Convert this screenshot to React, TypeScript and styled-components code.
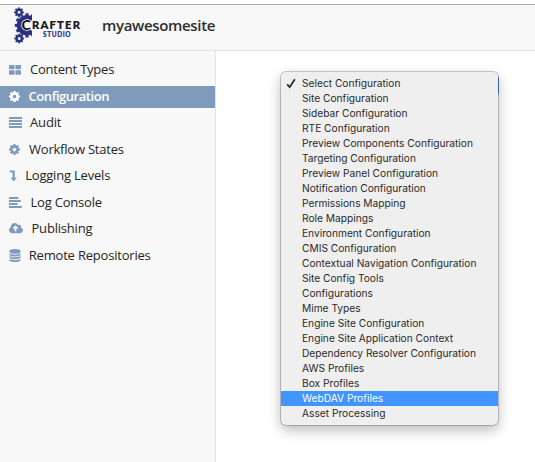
import React from "react";
import styled, { createGlobalStyle } from "styled-components";

const GlobalStyle = createGlobalStyle`
  * { box-sizing: border-box; }
  body { margin: 0; background: #fff; overflow: hidden; }
`;

const Page = styled.div`
  display: flex;
  flex-direction: column;
  width: 535px;
  height: 462px;
  padding-top: 4px;
  background: #fff;
  font-family: "Open Sans", sans-serif;
  color: #262626;
`;

const Header = styled.header`
  display: flex;
  flex: 0 0 47px;
  border-top: 1px solid #a9a9a9;
  border-bottom: 1px solid #e3e3e3;
  background: #f8f8f8;
  padding-left: 12px;
`;

const Logo = styled.svg`
  width: 70px;
  height: 40px;
  flex: none;
  margin-top: 1px;
`;

const SiteName = styled.h1`
  margin: 8px 0 0 20px;
  font-size: 15px;
  line-height: 24px;
  font-weight: 600;
  letter-spacing: -0.33px;
  color: #2e2e2e;
`;

const Body = styled.div`
  display: flex;
  flex: 1;
  min-height: 0;
`;

const Sidebar = styled.nav`
  flex: 0 0 216px;
  border-right: 1px solid #e3e3e3;
  background: #f8f8f8;
  padding-top: 6px;
`;

const NavRow = styled.a<{ $active?: boolean }>`
  display: flex;
  align-items: center;
  height: 22px;
  margin: 2px 0 4.55px;
  padding-left: 9px;
  font-size: 13px;
  line-height: 20px;
  white-space: nowrap;
  color: ${(p) => (p.$active ? "#fff" : "#262626")};
  font-weight: ${(p) => (p.$active ? 600 : 400)};
  background: ${(p) => (p.$active ? "#7e9bbb" : "transparent")};
`;

const NavIcon = styled.svg<{ $w: number }>`
  flex: none;
  width: ${(p) => p.$w}px;
  height: 13px;
  fill: currentColor;
`;

const IconTint = styled.span<{ $active?: boolean; $slot: number }>`
  display: flex;
  flex: 0 0 ${(p) => p.$slot}px;
  margin-bottom: 1px;
  color: ${(p) => (p.$active ? "#fff" : "#7e9bbb")};
`;

const NavLabel = styled.span<{ $track: number }>`
  margin-bottom: 2px;
  letter-spacing: ${(p) => p.$track}px;
`;

const Content = styled.main`
  position: relative;
  flex: 1;
  background: #fff;
`;

const SelectField = styled.div`
  position: absolute;
  left: 70px;
  top: 24px;
  width: 213px;
  height: 21px;
  border-radius: 4px;
  background: #4a90e8;
`;

const Menu = styled.ul`
  position: absolute;
  left: 65px;
  top: 21px;
  width: 217px;
  margin: 0;
  padding: 4px 0;
  list-style: none;
  border-radius: 5px;
  background: #efefef;
  box-shadow: 0 0 0 1px rgba(0, 0, 0, 0.2), 0 5px 13px rgba(0, 0, 0, 0.28);
  font-family: Inter, sans-serif;
`;

const Option = styled.li<{ $selected?: boolean }>`
  display: flex;
  align-items: center;
  height: 15px;
  padding-left: 5px;
  font-size: 10.2px;
  line-height: 15px;
  white-space: nowrap;
  color: ${(p) => (p.$selected ? "#fff" : "#2a2a2a")};
  background: ${(p) => (p.$selected ? "#4294ff" : "transparent")};
`;

const CheckSlot = styled.span`
  display: flex;
  flex: 0 0 16px;
`;

const OptionLabel = styled.span`
  letter-spacing: 0;
`;

const COG =
  "M1152 896q0-106-75-181t-181-75-181 75-75 181 75 181 181 75 181-75 75-181zm512-109v222q0 12-8 23t-20 13l-185 28q-19 54-39 91 35 50 107 138 10 12 10 25t-9 23q-27 37-99 108t-94 71q-12 0-26-9l-138-108q-44 23-91 38-16 136-29 186-7 28-36 28h-222q-14 0-24.5-8.5t-11.5-21.5l-28-184q-49-16-90-37l-141 107q-10 9-25 9-14 0-25-11-126-114-165-168-7-10-7-23 0-12 8-23 15-21 51-66.5t54-70.5q-27-50-41-99l-183-27q-13-2-21-12.5t-8-23.5v-222q0-12 8-23t19-13l186-28q14-46 39-92-40-57-107-138-10-12-10-24 0-10 9-23 26-36 98.5-107.5t94.5-71.5q13 0 26 10l138 107q44-23 91-38 16-136 29-186 7-28 36-28h222q14 0 24.5 8.5t11.5 21.5l28 184q49 16 90 37l142-107q9-9 24-9 13 0 25 10 129 119 165 170 7 8 7 22 0 12-8 23-15 21-51 66.5t-54 70.5q26 50 41 98l183 28q13 2 21 12.5t8 23.5z";
const CLOUD =
  "M1216 864q0-14-9-23l-352-352q-9-9-23-9t-23 9l-351 351q-10 12-10 24 0 14 9 23t23 9h224v352q0 13 9.5 22.5t22.5 9.5h192q13 0 22.5-9.5t9.5-22.5v-352h224q13 0 22.5-9.5t9.5-22.5zm640 288q0 159-112.5 271.5t-271.5 112.5h-1088q-185 0-316.5-131.5t-131.5-316.5q0-130 70-240t188-165q-2-30-2-43 0-212 150-362t362-150q156 0 285.5 87t188.5 231q71-62 166-62 106 0 181 75t75 181q0 76-41 138 130 31 213.5 135.5t83.5 238.5z";
const DATABASE =
  "M896 768q237 0 443-43t325-127v170q0 69-103 128t-280 93.5-385 34.5-385-34.5-280-93.5-103-128v-170q119 84 325 127t443 43zm0 768q237 0 443-43t325-127v170q0 69-103 128t-280 93.5-385 34.5-385-34.5-280-93.5-103-128v-170q119 84 325 127t443 43zm0-384q237 0 443-43t325-127v170q0 69-103 128t-280 93.5-385 34.5-385-34.5-280-93.5-103-128v-170q119 84 325 127t443 43zm0-1152q208 0 385 34.5t280 93.5 103 128v128q0 69-103 128t-280 93.5-385 34.5-385-34.5-280-93.5-103-128v-128q0-69 103-128t280-93.5 385-34.5z";

const icons: Record<string, { w: number; box: string; d: string }> = {
  grid: {
    w: 12,
    box: "0 0 12 13",
    d: "M.8 2h4a.8.8 0 0 1 .8.8v2.700a.8.8 0 0 1-.8.8h-4A.8.8 0 0 1 0 5.500V2.800A.8.8 0 0 1 .8 2zM7.200 2h4a.8.8 0 0 1 .8.8v2.700a.8.8 0 0 1-.8.8h-4a.8.8 0 0 1-.8-.8V2.800a.8.8 0 0 1 .8-.8zM.8 7.300h4a.8.8 0 0 1 .8.8v2.900a.8.8 0 0 1-.8.8h-4A.8.8 0 0 1 0 11V8.100a.8.8 0 0 1 .8-.8zM7.200 7.300h4a.8.8 0 0 1 .8.8V11a.8.8 0 0 1-.8.8h-4a.8.8 0 0 1-.8-.8V8.100a.8.8 0 0 1 .8-.8z",
  },
  cog: { w: 11, box: "128 0 1536 1792", d: COG },
  justify: { w: 13, box: "0 0 13 13", d: "M0 1h13v1.900H0zM0 4h13v1.900H0zM0 7h13v1.900H0zM0 10h13v1.900H0z" },
  left: { w: 13, box: "0 0 13 13", d: "M0 1h9.300v1.900H0zM0 4h11.800v1.900H0zM0 7h8.500v1.900H0zM0 10h12.800v1.900H0z" },
  down: { w: 8, box: "0 0 8 13", d: "M0 1.500h5.800v7.200h2.100L4.700 12.300 1.500 8.700h2.100V3.500H1.500z" },
  cloud: { w: 14, box: "-64 0 1920 1792", d: CLOUD },
  database: { w: 12, box: "128 0 1536 1792", d: DATABASE },
};

const nav = [
  { icon: "grid", text: "Content Types", slot: 21, track: -0.22 },
  { icon: "cog", text: "Configuration", slot: 19.6, track: -0.46, active: true },
  { icon: "justify", text: "Audit", slot: 21, track: -0.15 },
  { icon: "cog", text: "Workflow States", slot: 20, track: -0.22 },
  { icon: "down", text: "Logging Levels", slot: 16.2, track: -0.2 },
  { icon: "left", text: "Log Console", slot: 21.5, track: -0.2 },
  { icon: "cloud", text: "Publishing", slot: 22.5, track: -0.2 },
  { icon: "database", text: "Remote Repositories", slot: 19.8, track: -0.2 },
];

const options = [
  "Select Configuration", "Site Configuration", "Sidebar Configuration", "RTE Configuration",
  "Preview Components Configuration", "Targeting Configuration", "Preview Panel Configuration",
  "Notification Configuration", "Permissions Mapping", "Role Mappings", "Environment Configuration",
  "CMIS Configuration", "Contextual Navigation Configuration", "Site Config Tools", "Configurations",
  "Mime Types", "Engine Site Configuration", "Engine Site Application Context",
  "Dependency Resolver Configuration", "AWS Profiles", "Box Profiles", "WebDAV Profiles", "Asset Processing",
];

function gearPath(cx: number, cy: number, outer: number, root: number, hole: number, teeth: number) {
  const step = (2 * Math.PI) / teeth;
  const points: string[] = [];
  for (let i = 0; i < teeth; i++) {
    const a = i * step;
    const corners: [number, number][] = [[-0.31, root], [-0.22, outer], [0.22, outer], [0.31, root]];
    for (const [offset, r] of corners) {
      const t = a + offset * step;
      points.push(`${(cx + r * Math.cos(t)).toFixed(2)} ${(cy + r * Math.sin(t)).toFixed(2)}`);
    }
  }
  return `M${points.join("L")}ZM${cx - hole} ${cy}a${hole} ${hole} 0 1 0 ${2 * hole} 0a${hole} ${hole} 0 1 0 ${-2 * hole} 0Z`;
}

function CrafterLogo() {
  return (
    <Logo viewBox="12 6 70 40">
      <defs>
        <clipPath id="gear-side">
          <path d="M12 6h20v14l-5 6 5 5v15H12z" />
        </clipPath>
      </defs>
      <g fill="#2b3184" fillRule="evenodd" stroke="#e3ddd8" strokeWidth="0.8" paintOrder="stroke">
        <path clipPath="url(#gear-side)" d={gearPath(27, 25.3, 12.2, 10.2, 4.6, 12)} />
        <path d={gearPath(19, 12.3, 4.9, 3.800, 1.500, 8)} />
        <path d={gearPath(19.2, 38.500, 4.900, 3.800, 1.500, 8)} />
      </g>
      <g fontFamily="Lato" fontWeight="900">
        <text x="21.6" y="29.800" fontSize="14" fill="#161616" stroke="#f8f8f8" strokeWidth="1.500" paintOrder="stroke">C</text>
        <text x="32" y="28.700" fontSize="11.200" textLength="48" fill="#161616" stroke="#161616" strokeWidth="0.2">RAFTER</text>
        <text x="43" y="37" fontSize="6.500" textLength="27.500" fill="#2f3588" stroke="#2f3588" strokeWidth="0.15">STUDIO</text>
      </g>
    </Logo>
  );
}

export default function App() {
  return (
    <>
      <GlobalStyle />
      <Page>
        <Header>
          <CrafterLogo />
          <SiteName>myawesomesite</SiteName>
        </Header>
        <Body>
          <Sidebar>
            {nav.map((item) => {
              const icon = icons[item.icon];
              return (
                <NavRow key={item.text} $active={item.active}>
                  <IconTint $active={item.active} $slot={item.slot}>
                    <NavIcon $w={icon.w} viewBox={icon.box}>
                      <path d={icon.d} />
                    </NavIcon>
                  </IconTint>
                  <NavLabel $track={item.track}>{item.text}</NavLabel>
                </NavRow>
              );
            })}
          </Sidebar>
          <Content>
            <SelectField />
            <Menu>
              {options.map((text, i) => (
                <Option key={text} $selected={text === "WebDAV Profiles"}>
                  <CheckSlot>
                    {i === 0 && (
                      <svg width="10" height="11" viewBox="0 0 10 11" fill="none" stroke="#222" strokeWidth="1.700">
                        <path d="M1.200 6.400 3.700 9.200 8.800 1.300" />
                      </svg>
                    )}
                  </CheckSlot>
                  <OptionLabel>{text}</OptionLabel>
                </Option>
              ))}
            </Menu>
          </Content>
        </Body>
      </Page>
    </>
  );
}
